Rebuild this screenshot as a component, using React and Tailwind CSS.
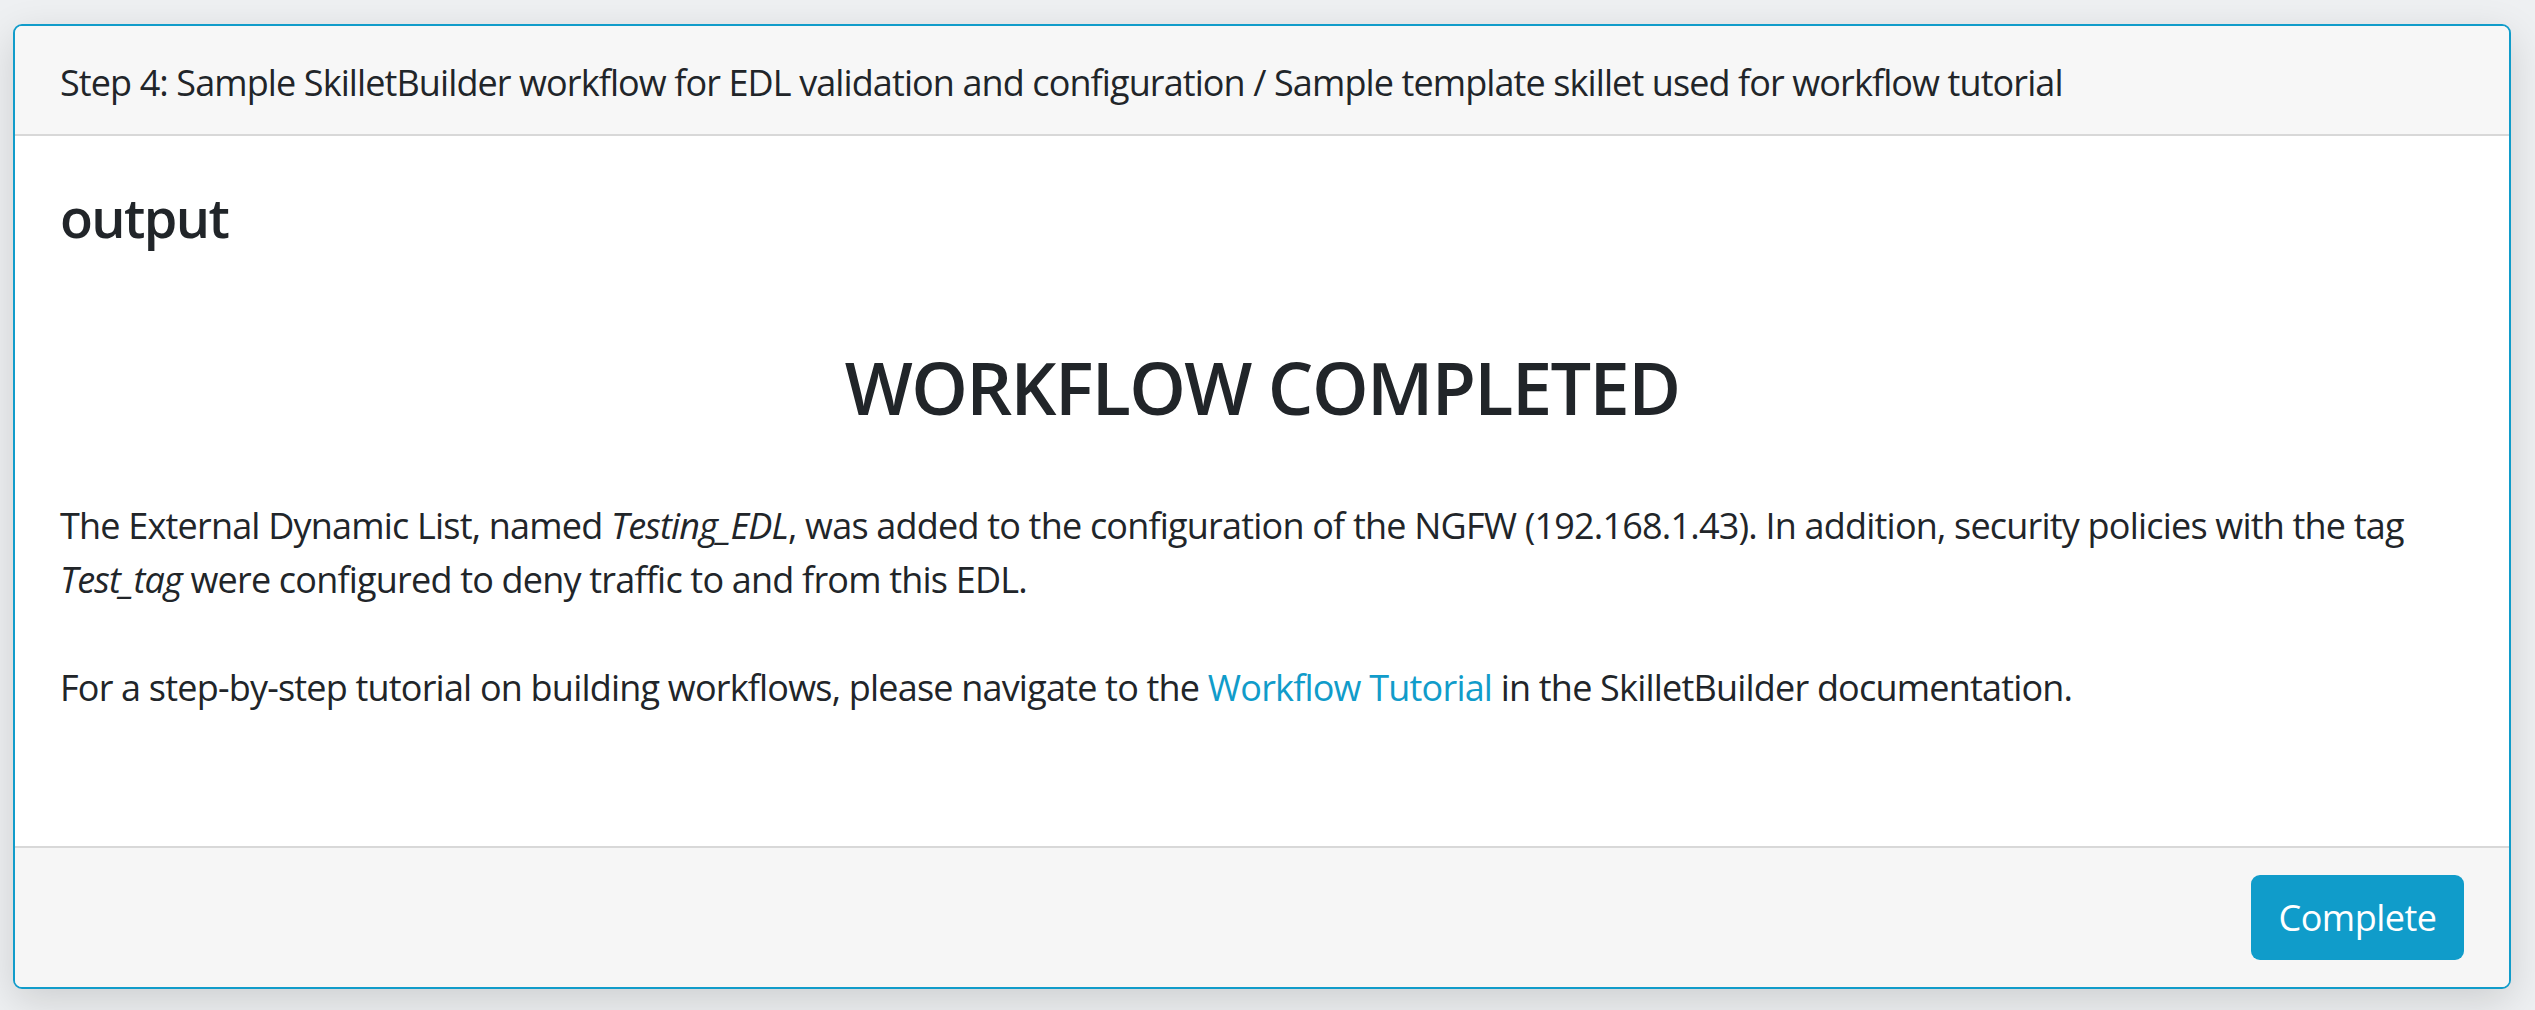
export default function App() {
  const font = { fontFamily: '"Open Sans", "Noto Sans", sans-serif' };
  return (
    <div
      className="min-h-screen w-full bg-[#eef0f2] pt-[24px] pl-[13px] pr-[24px] pb-[21px] text-[#212529]"
      style={font}
    >
      <div className="flex flex-col rounded-[9px] border-2 border-[#119cca] bg-white shadow-[0_12px_40px_rgba(0,0,0,0.14)] overflow-hidden">
        <div className="bg-[#f7f7f7] border-b-2 border-[#d8d8d8] px-[45px] pt-[30px] pb-[24px] text-[36px] leading-[54px] tracking-[-0.9px]">
          Step 4: Sample SkilletBuilder workflow for EDL validation and configuration / Sample template skillet used for workflow tutorial
        </div>
        <div className="px-[45px] pt-[49px] pb-[45px]">
          <h4 className="text-[54px] leading-[65px] font-semibold tracking-[-1.6px]">output</h4>
          <h2 className="mt-[94px] text-center text-[72px] leading-[86px] font-semibold tracking-[-1.6px]">WORKFLOW COMPLETED</h2>
          <p className="mt-[69px] text-[36px] leading-[54px] tracking-[-0.8px]">
            The External Dynamic List, named <em>Testing_EDL</em>, was added to the configuration of the NGFW (192.168.1.43). In addition, security policies with the tag
            <br />
            <em>Test_tag</em> were configured to deny traffic to and from this EDL.
          </p>
          <p className="mt-[54px] mb-[86px] text-[36px] leading-[54px] tracking-[-0.8px]">
            For a step-by-step tutorial on building workflows, please navigate to the{" "}
            <a href="#" className="text-[#119cca]">Workflow Tutorial</a> in the SkilletBuilder documentation.
          </p>
        </div>
        <div className="flex justify-end bg-[#f6f6f6] border-t-2 border-[#d8d8d8] px-[45px] py-[27px]">
          <button className="h-[85px] w-[213px] rounded-[9px] bg-[#109cca] text-white text-[36px] leading-[54px] tracking-[-0.5px]">
            Complete
          </button>
        </div>
      </div>
    </div>
  );
}
